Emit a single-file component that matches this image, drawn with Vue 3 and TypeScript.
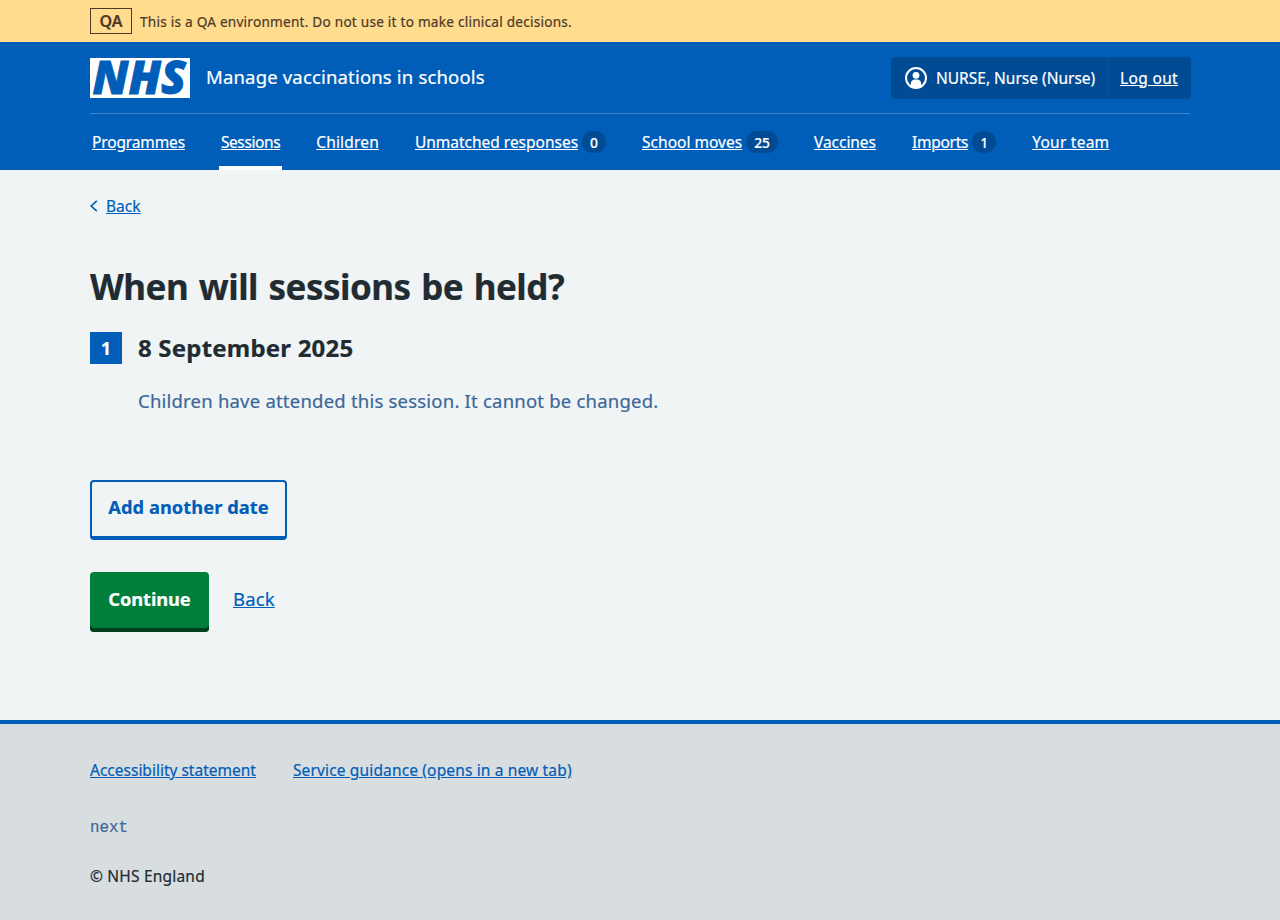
<script setup lang="ts">
interface NavItem {
  label: string
  key: string
  count?: number
  current?: boolean
}

const navItems: NavItem[] = [
  { label: 'Programmes', key: 'programmes' },
  { label: 'Sessions', key: 'sessions', current: true },
  { label: 'Children', key: 'children' },
  { label: 'Unmatched responses', key: 'responses', count: 0 },
  { label: 'School moves', key: 'moves', count: 25 },
  { label: 'Vaccines', key: 'vaccines' },
  { label: 'Imports', key: 'imports', count: 1 },
  { label: 'Your team', key: 'team' },
]
</script>

<template>
  <div class="page">
    <div class="environment">
      <div class="container environment-row">
        <strong class="environment-tag">QA</strong>
        <span class="environment-text">This is a QA environment. Do not use it to make clinical decisions.</span>
      </div>
    </div>

    <header class="header">
      <div class="container">
        <div class="header-top">
          <a class="brand">
            <svg class="logo" viewBox="0 0 100 40" width="100" height="40" role="img" aria-label="NHS">
              <rect width="100" height="40" fill="#fff" />
              <text class="logo-letters" x="2.5" y="36.3" textLength="93.5" lengthAdjust="spacingAndGlyphs">NHS</text>
            </svg>
            <span class="service">Manage vaccinations in schools</span>
          </a>
          <div class="account">
            <div class="account-user">
              <svg class="user-icon" viewBox="0 0 24 24" width="24" height="24" aria-hidden="true">
                <circle cx="12" cy="12" r="10" fill="none" stroke="#fff" stroke-width="2" />
                <circle cx="12" cy="9.3" r="3.4" fill="#fff" />
                <path d="M6.8 19.8v-2.3c0-2.2 1.8-4 4-4h2.4c2.2 0 4 1.800 4 4v2.300c-3 2.200-7.400 2.200-10.400 0z" fill="#fff" />
              </svg>
              <span>NURSE, Nurse (Nurse)</span>
            </div>
            <div class="account-logout"><a class="logout">Log out</a></div>
          </div>
        </div>
        <nav class="nav">
          <div v-for="item in navItems" :key="item.key" class="nav-item" :class="{ current: item.current }">
            <a class="nav-link" :class="item.key">{{ item.label }}</a>
            <span v-if="item.count !== undefined" class="count">{{ item.count }}</span>
          </div>
        </nav>
      </div>
    </header>

    <main class="container main">
      <div class="back-row">
        <svg class="chevron" viewBox="0 0 8 12" width="8" height="12" aria-hidden="true">
          <path d="M6.800 .8 1.200 6l5.600 5.200" fill="none" stroke="#005eb8" stroke-width="1.700" />
        </svg>
        <a class="link small">Back</a>
      </div>
      <h1>When will sessions be held?</h1>
      <div class="session-title">
        <span class="number">1</span>
        <h2>8 September 2025</h2>
      </div>
      <p class="hint">Children have attended this session. It cannot be changed.</p>
      <button class="button secondary" type="button">Add another date</button>
      <div class="actions">
        <button class="button primary" type="button">Continue</button>
        <a class="link">Back</a>
      </div>
    </main>

    <footer class="footer">
      <div class="container">
        <div class="footer-links">
          <a class="link small">Accessibility statement</a>
          <a class="link small guidance">Service guidance (opens in a new tab)</a>
        </div>
        <div class="version">next</div>
        <div class="copyright">© NHS England</div>
      </div>
    </footer>
  </div>
</template>

<style>
body {
  margin: 0;
  background: #d8dde0;
}
</style>

<style scoped>
* {
  box-sizing: border-box;
}
.page {
  height: 920px;
  display: flex;
  flex-direction: column;
  overflow: hidden;
  background: #f0f4f5;
  color: #212b32;
  font-family: "Noto Sans", "Open Sans", sans-serif;
  font-size: 18.5px;
  line-height: 28px;
  -webkit-text-stroke-width: 0.2px;
}
.container {
  width: 1100px;
  margin: 0 auto;
}
.environment {
  height: 42px;
  background: #ffdc8e;
  color: #4d3a28;
}
.environment-row {
  display: flex;
  align-items: center;
  gap: 8px;
  height: 42px;
}
.environment-tag {
  width: 42px;
  height: 26px;
  border: 1px solid #4d3a28;
  font-size: 16px;
  font-weight: 600;
  line-height: 24px;
  text-align: center;
}
.environment-text {
  font-size: 13.6px;
  letter-spacing: 0.24px;
  white-space: nowrap;
  line-height: 24px;
  padding-top: 1px;
}
.header {
  height: 128px;
  background: #005eb8;
  color: #fff;
}
.header-top {
  height: 72px;
  display: flex;
  justify-content: space-between;
  align-items: center;
  border-bottom: 1px solid #3e86d0;
}
.brand {
  display: flex;
  align-items: center;
  gap: 16px;
}
.logo {
  display: block;
  overflow: visible;
}
.logo-letters {
  fill: #005eb8;
  stroke: #005eb8;
  stroke-width: 0.8px;
  font-family: "Noto Sans", "Open Sans", sans-serif;
  font-size: 45.5px;
  font-weight: 900;
  font-style: italic;
}
.service {
  letter-spacing: 0.17px;
  line-height: 28px;
  padding-bottom: 2px;
}
.account {
  display: flex;
  height: 42px;
  margin-right: -1px;
  border-radius: 4px;
  background: #004b93;
  font-size: 15.5px;
  line-height: 24px;
}
.account-user {
  display: flex;
  align-items: center;
  gap: 8px;
  width: 217px;
  padding-left: 13px;
  border-right: 1px solid #0056a9;
  white-space: nowrap;
}
.account-logout {
  display: flex;
  align-items: center;
  width: 83px;
  padding-left: 12px;
}
.logout {
  letter-spacing: 0.35px;
  text-decoration: underline;
}
.nav {
  display: flex;
  gap: 32px;
  height: 56px;
}
.nav-item {
  display: flex;
  align-items: center;
  gap: 4px;
  padding: 4px 2px 0;
  border-bottom: 4px solid transparent;
  font-size: 15.5px;
  line-height: 24px;
  white-space: nowrap;
}
.nav-item.current {
  border-color: #fff;
}
.nav-link {
  text-decoration: underline;
}
.programmes { letter-spacing: -0.14px; }
.sessions { letter-spacing: -0.4px; }
.children { letter-spacing: 0.17px; }
.responses { letter-spacing: -0.01px; }
.moves { letter-spacing: 0.02px; }
.vaccines { letter-spacing: -0.05px; }
.imports { letter-spacing: -0.26px; }
.team { letter-spacing: 0.25px; }
.count {
  min-width: 24px;
  height: 22px;
  padding: 0 8px;
  border-radius: 11px;
  background: #004b93;
  font-size: 13.8px;
  font-weight: 500;
  line-height: 23px;
  text-align: center;
}
.main {
  height: 550px;
}
.link {
  color: #005eb8;
  text-decoration: underline;
}
.small {
  font-size: 15.5px;
  line-height: 24px;
}
.back-row {
  display: flex;
  align-items: center;
  gap: 8px;
  height: 24px;
  margin-top: 24px;
}
h1 {
  margin: 47px 0 0;
  font-size: 35px;
  font-weight: 700;
  line-height: 44px;
  letter-spacing: -0.52px;
  word-spacing: 2px;
}
.session-title {
  display: flex;
  align-items: center;
  gap: 16px;
  height: 32px;
  margin-top: 23px;
}
.number {
  width: 32px;
  height: 32px;
  background: #005eb8;
  color: #fff;
  font-size: 17.5px;
  font-weight: 700;
  line-height: 32px;
  text-align: center;
}
h2 {
  margin: 0;
  font-size: 24px;
  font-weight: 700;
  line-height: 32px;
  letter-spacing: 0.2px;
}
.hint {
  margin: 23px 0 65px 48px;
  color: #3b6799;
  letter-spacing: 0.21px;
}
.button {
  display: block;
  height: 60px;
  padding: 0 0 6px;
  border-radius: 4px;
  font-family: inherit;
  font-size: 18.3px;
  font-weight: 700;
  line-height: 28px;
}
.secondary {
  width: 197px;
  border: 2px solid #005eb8;
  border-bottom-width: 4px;
  padding-bottom: 5px;
  background: transparent;
  color: #005eb8;
  letter-spacing: 0.05px;
}
.primary {
  width: 119px;
  border: 0;
  background: #007f3b;
  box-shadow: inset 0 -4px #00401e;
  color: #fff;
  letter-spacing: -0.1px;
}
.actions {
  display: flex;
  align-items: center;
  gap: 24px;
  margin-top: 32px;
}
.actions .link {
  padding-bottom: 6px;
  letter-spacing: 0.15px;
}
.footer {
  flex: 1;
  border-top: 4px solid #005eb8;
  background: #d8dde0;
  font-size: 15.5px;
  line-height: 24px;
}
.footer-links {
  display: flex;
  gap: 37px;
  padding-top: 34px;
}
.guidance {
  letter-spacing: 0.15px;
}
.version {
  margin-top: 34px;
  color: #3b6799;
  font-family: "Liberation Mono", monospace;
  font-size: 15.8px;
}
.copyright {
  margin-top: 24px;
  letter-spacing: 0.2px;
}
</style>
